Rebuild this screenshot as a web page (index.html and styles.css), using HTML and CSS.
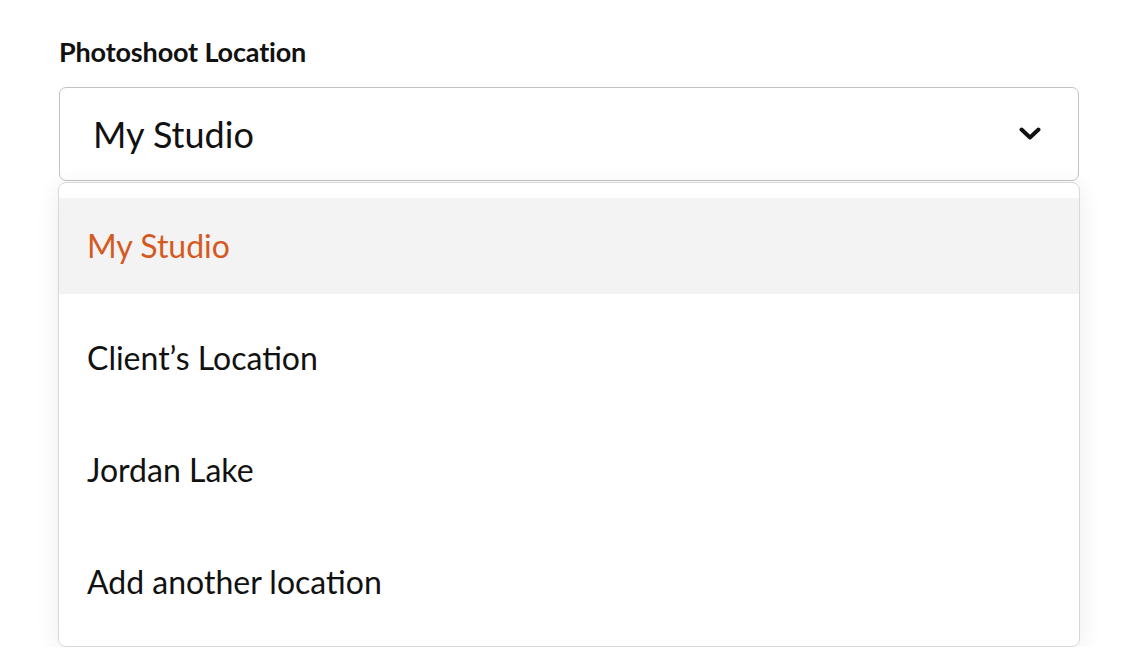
FILE: index.html
```html
<!DOCTYPE html>
<html>
<head>
<meta charset="utf-8">
<link rel="stylesheet" href="styles.css">
</head>
<body>
<div class="field">
  <div class="label">Photoshoot Location</div>
  <div class="select">
    <span class="value">My Studio</span>
    <svg class="chevron" width="22" height="14" viewBox="0 0 22 14"><path d="M2.5 2.5 L11 10.5 L19.5 2.5" fill="none" stroke="#111" stroke-width="4" stroke-linecap="round" stroke-linejoin="round"/></svg>
  </div>
  <div class="menu">
    <div class="option active">My Studio</div>
    <div class="option">Client’s Location</div>
    <div class="option">Jordan Lake</div>
    <div class="option">Add another location</div>
  </div>
</div>
</body>
</html>
```
FILE: styles.css
```css
html, body {
  margin: 0;
  background: #fff;
}
body {
  font-family: Lato, "Noto Sans", sans-serif;
  color: #111;
}
.field {
  width: 1020px;
  padding: 36px 0 0 59px;
}
.label {
  font-weight: 700;
  font-size: 27px;
  letter-spacing: -0.15px;
  line-height: 32px;
  margin-bottom: 19px;
}
.select {
  box-sizing: border-box;
  height: 94px;
  border: 1px solid #c2c2c2;
  border-radius: 7px;
  display: flex;
  align-items: center;
  justify-content: space-between;
  padding: 0 37px 0 33px;
}
.value {
  font-size: 36px;
}
.chevron {
  display: block;
}
.menu {
  margin: 1px -1px 0;
  border: 1px solid #d8d8d8;
  border-radius: 8px;
  padding: 15px 0 16px;
  display: flex;
  flex-direction: column;
  gap: 16px;
  box-shadow: 0 4px 24px rgba(0, 0, 0, 0.08);
}
.option {
  height: 96px;
  display: flex;
  align-items: center;
  padding-left: 28px;
  padding-bottom: 2px;
  box-sizing: border-box;
  font-size: 32px;
}
.option.active {
  background: #f3f3f3;
  color: #d45a1f;
}
```
